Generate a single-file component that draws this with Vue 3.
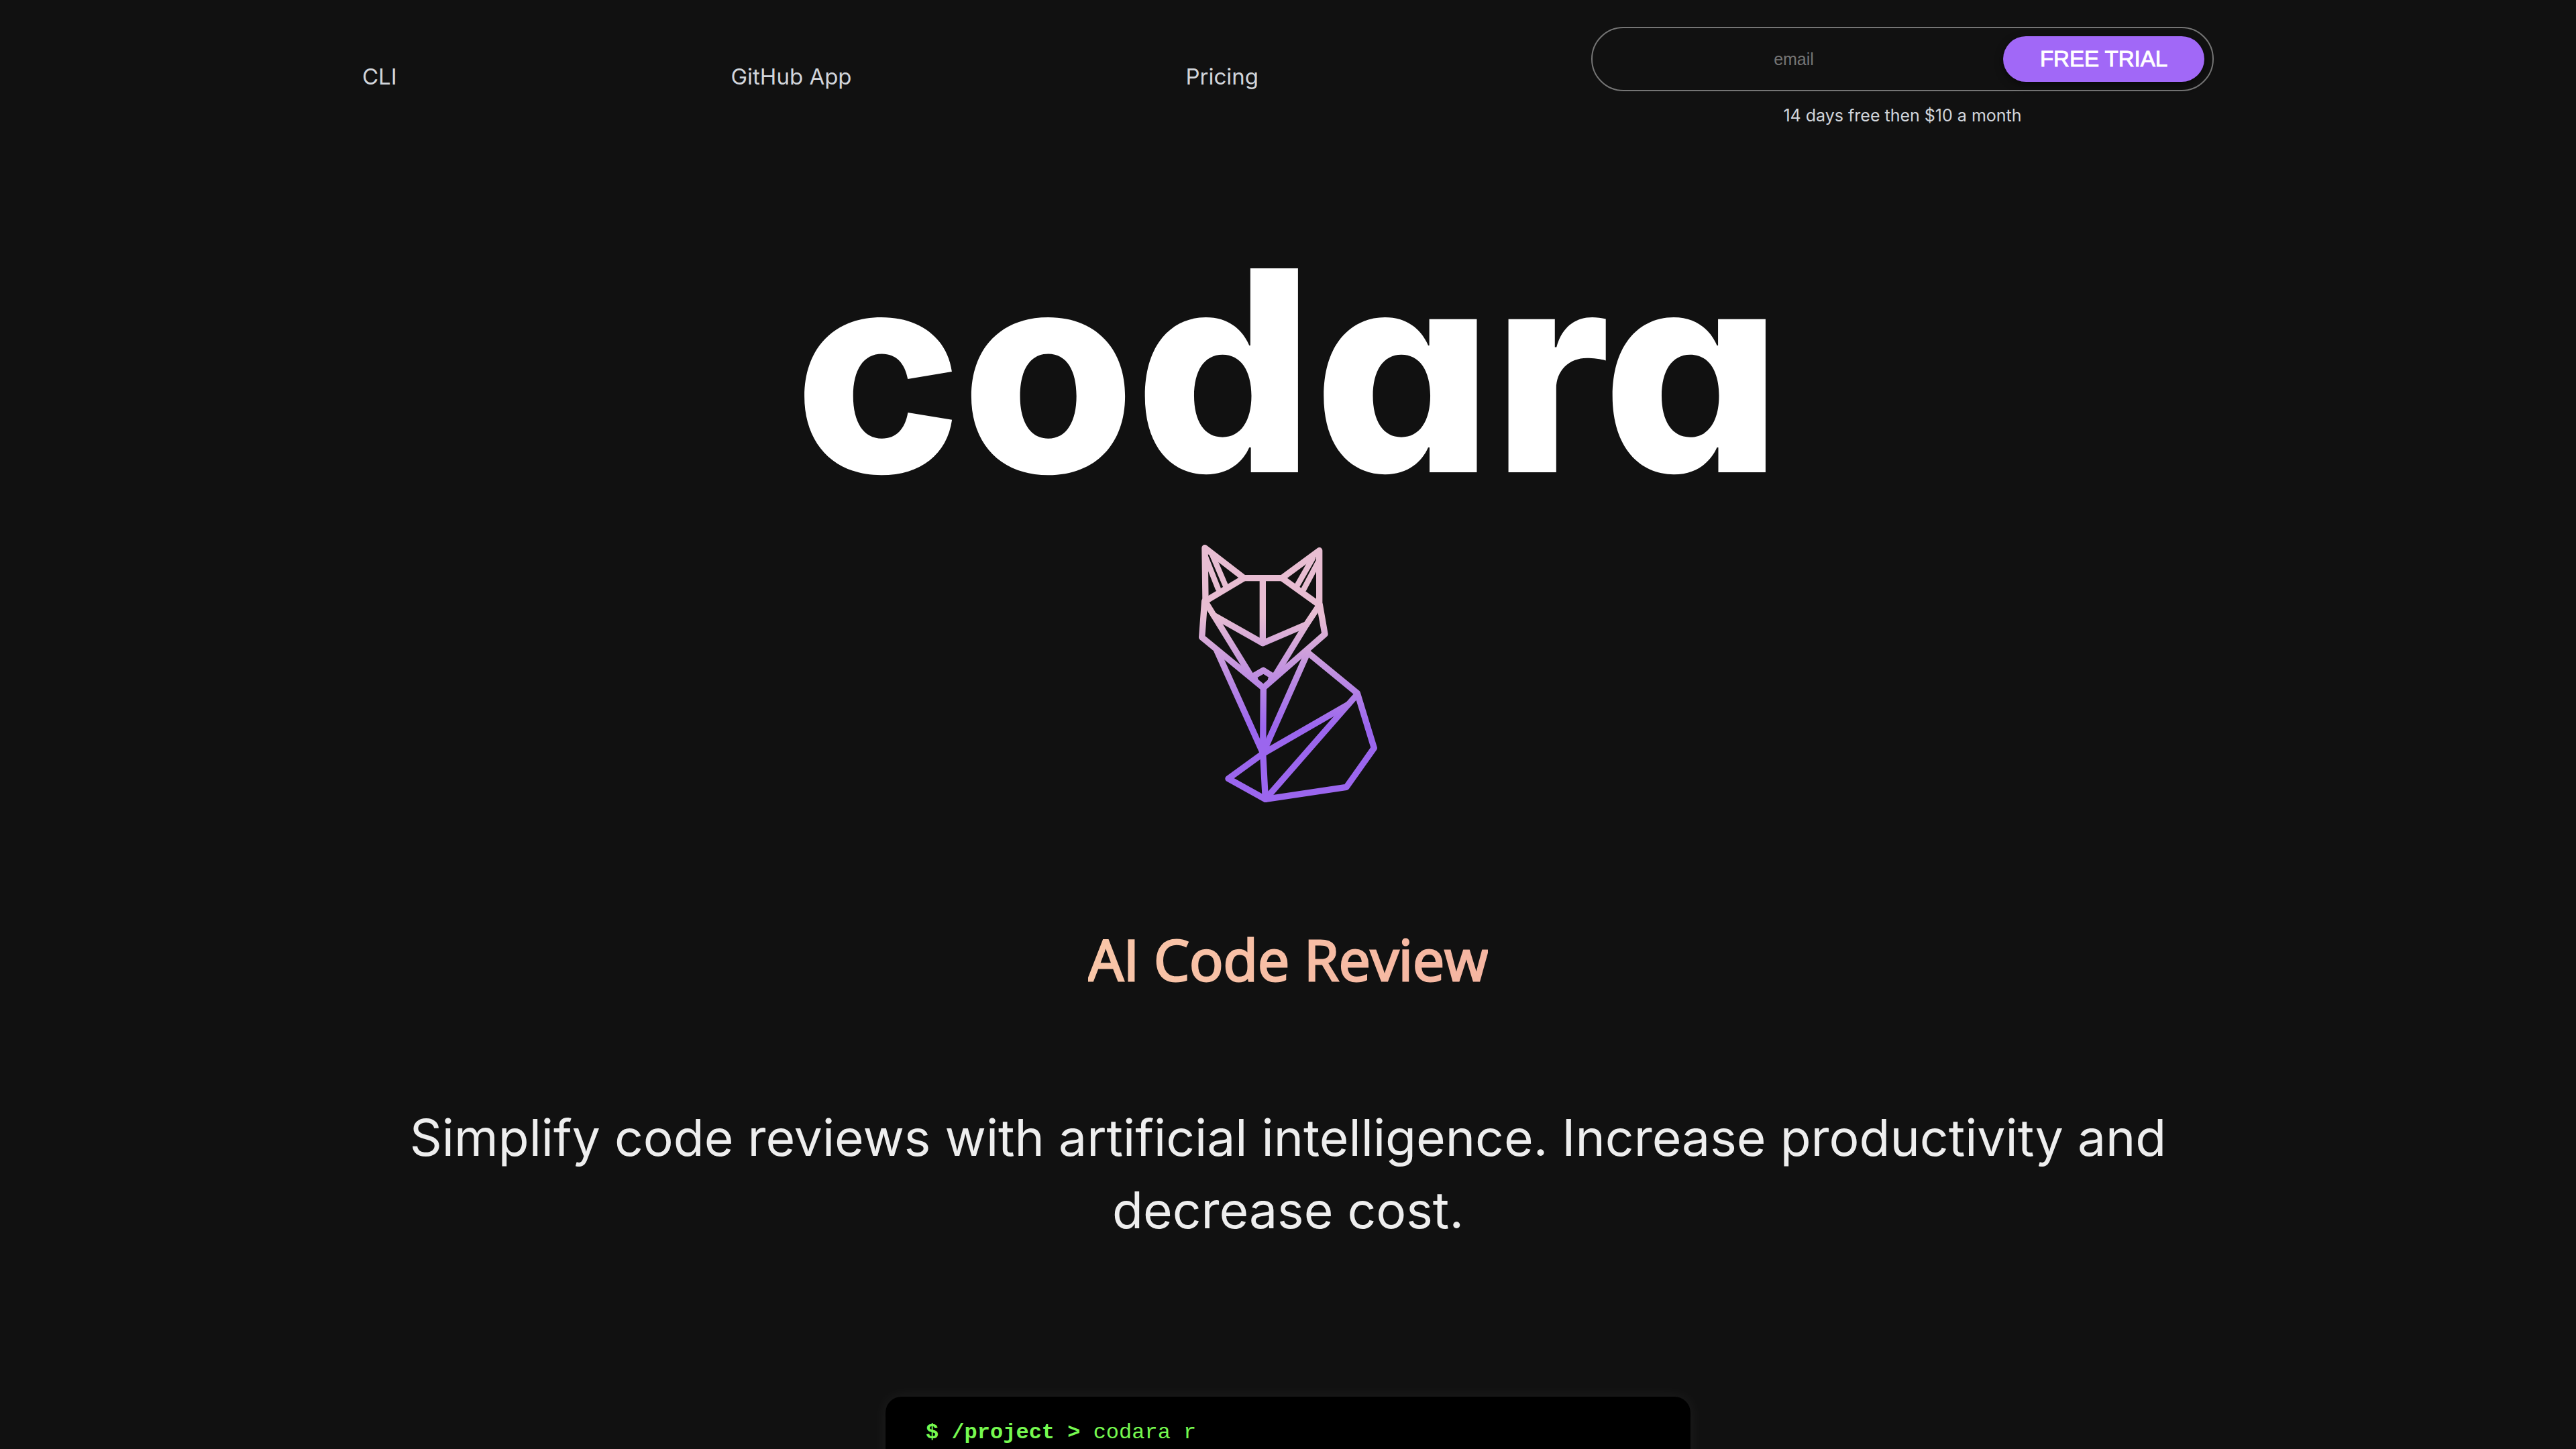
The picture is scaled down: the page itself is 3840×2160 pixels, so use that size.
<script setup>
import { ref } from 'vue'

const email = ref('')
const links = ['CLI', 'GitHub App', 'Pricing']
</script>

<template>
  <div class="page">
    <header class="top">
      <nav class="links">
        <a v-for="link in links" :key="link" href="#">{{ link }}</a>
      </nav>
      <form class="trial" @submit.prevent>
        <div class="field">
          <input v-model="email" type="email" placeholder="email" aria-label="email" />
          <button type="submit">FREE TRIAL</button>
        </div>
        <p class="note">14 days free then $10 a month</p>
      </form>
    </header>

    <main class="hero">
      <h1 class="wordmark">codara</h1>
      <svg class="fox" viewBox="0 0 960 1260" aria-hidden="true">
        <defs>
          <linearGradient id="fur" gradientUnits="userSpaceOnUse" x1="0" y1="380" x2="0" y2="880">
            <stop offset="0" stop-color="#e8bdd2" />
            <stop offset="1" stop-color="#9b66ee" />
          </linearGradient>
        </defs>
        <g fill="none" stroke="url(#fur)" stroke-width="28" stroke-linecap="round" stroke-linejoin="round">
          <path d="M111 318 L108 80 L283 215 H453 L620 92 V335" />
          <path d="M111 318 L283 215 M453 215 L620 335" />
          <path stroke-width="25" d="M109 115 L167 262 M138 103 L200 248 M592 124 L520 250 M620 134 L550 266" />
          <path d="M367 215 V506" />
          <path d="M107 318 L95 480 L370 706 L645 466 L622 335" />
          <path d="M113 325 L148 382 L367 506 L563 422 L616 342" />
          <path d="M148 382 L318 658 L370 628 L418 658 L563 422" />
          <path d="M318 658 L332 668 M418 658 L404 668" />
          <path d="M162 540 L368 998 L568 548 L790 730 L865 975 L741 1150 L379 1204 L213 1112 L368 1000 L750 780 L790 735" />
          <path d="M370 706 L368 998 L379 1204 L750 780" />
        </g>
      </svg>
      <h2 class="tagline">AI Code Review</h2>
      <p class="pitch">
        Simplify code reviews with artificial intelligence. Increase productivity and decrease cost.
      </p>
      <div class="terminal"><b>$ /project &gt; </b>codara r</div>
    </main>
  </div>
</template>

<style>
body {
  background: #111;
}
</style>

<style scoped>
.page {
  min-height: 100vh;
  max-height: 100vh;
  overflow: hidden;
  background: #111;
  color: #d1d5db;
  font-family: Inter, "Noto Sans", sans-serif;
}
.top {
  box-sizing: border-box;
  display: flex;
  justify-content: space-between;
  gap: 496px;
  height: 230px;
  padding: 40px 540px 0;
}
.links {
  display: flex;
  flex: 1;
  justify-content: space-between;
  padding-top: 50px;
  white-space: nowrap;
}
.links a {
  color: inherit;
  font-size: 33px;
  line-height: 48px;
  text-decoration: none;
}
.trial {
  width: 928px;
}
.field {
  box-sizing: border-box;
  display: flex;
  align-items: center;
  height: 96px;
  padding-right: 12px;
  border: 2px solid #757575;
  border-radius: 48px;
}
.field input {
  flex: 1;
  min-width: 0;
  padding: 0 12px 0 0;
  border: 0;
  outline: 0;
  background: none;
  color: #fff;
  font: 25px "Liberation Sans", sans-serif;
  text-align: center;
}
.field input::placeholder {
  color: #757575;
}
.field button {
  width: 300px;
  height: 68px;
  border: 0;
  border-radius: 34px;
  background: #a168f7;
  box-shadow: 0 4px 12px rgba(0, 0, 0, 0.5);
  color: #fff;
  font: 33px "Liberation Sans", sans-serif;
  -webkit-text-stroke: 1px #fff;
}
.note {
  margin: 18px 0 0;
  font-size: 25px;
  line-height: 36px;
  text-align: center;
}
.hero {
  display: flex;
  flex-direction: column;
  align-items: center;
}
.wordmark {
  margin: 92px 0 8px;
  color: #fff;
  font: 800 418px/460px Inter, sans-serif;
  font-feature-settings: "cv11";
}
.fox {
  width: 320px;
  height: 420px;
}
.tagline {
  margin: 160px 0 0;
  background: linear-gradient(90deg, #f9c6a8, #f5b5a1);
  background-clip: text;
  color: transparent;
  font: 500 84px/120px "Open Sans", sans-serif;
  -webkit-text-stroke: 3px transparent;
}
.pitch {
  max-width: 2760px;
  margin: 152px 0 0;
  color: #eee;
  font-size: 75px;
  line-height: 108px;
  text-align: center;
}
.terminal {
  box-sizing: border-box;
  width: 1200px;
  height: 400px;
  margin-top: 224px;
  padding: 34px 60px;
  border-radius: 24px;
  background: #000;
  box-shadow: 0 0 24px rgba(255, 255, 255, 0.06);
  color: #76f950;
  font: 32px/40px "Liberation Mono", monospace;
  white-space: pre;
}
</style>
